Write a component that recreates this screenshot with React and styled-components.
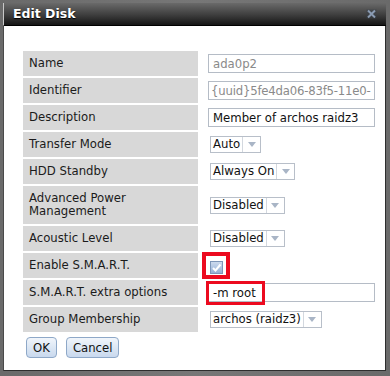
import * as React from "react";
import styled, { createGlobalStyle } from "styled-components";

const Global = createGlobalStyle`
    html, body {
        margin: 0;
        padding: 0;
        background: #6e6e6e;
    }
    body {
        width: 390px;
        height: 376px;
        overflow: hidden;
        font-family: "DejaVu Sans", Verdana, sans-serif;
    }
`;

const Frame = styled.div`
    width: 390px;
    height: 376px;
    box-sizing: border-box;
    padding: 3px 3px 0 3px;
    background: linear-gradient(to right, #6a6a6a, #777 50%, #6a6a6a);
`;

const Dialog = styled.div`
    width: 383px;
    height: 368px;
    box-sizing: border-box;
    display: flex;
    flex-direction: column;
    border: 1px solid #2e2e2e;
    border-top: none;
    border-left-color: #4a4a4a;
    background: #fff;
`;

const TitleBar = styled.div`
    height: 23px;
    box-sizing: border-box;
    display: flex;
    align-items: center;
    justify-content: space-between;
    padding: 0 9px 1px 9px;
    margin: 0 -1px;
    background: linear-gradient(to bottom, #6a6a6a 0%, #3d3d3d 55%, #151515 100%);
    border-left: 1px solid #c8c8c8;
    border-bottom: 1px solid #000;
`;

const Title = styled.span`
    color: #fff;
    font-size: 12.5px;
    font-weight: bold;
    text-shadow: 0 1px 1px #000;
`;

const Body = styled.div`
    flex: 1;
    padding: 24px 7px 0 19px;
    border-top: 1px solid #fff;
`;

const Form = styled.div`
    display: grid;
    grid-template-columns: 175px 1fr;
    row-gap: 2px;
`;

const Label = styled.div`
    background: #d8d8d8;
    color: #1b1b1b;
    font-size: 11.7px;
    line-height: 13px;
    padding: 6px 6px;
`;

const Value = styled.div`
    display: flex;
    align-items: center;
    padding-left: ${(p) => p.$indent || 10}px;
`;

const TextInput = styled.div`
    position: relative;
    width: 167px;
    height: 19px;
    box-sizing: border-box;
    border: 1px solid #b5bcc6;
    padding: 0 ${(p) => (p.$tight ? 2 : 4)}px;
    display: flex;
    align-items: center;
    font-size: 11.7px;
    letter-spacing: ${(p) => (p.$tight ? "-0.2px" : "normal")};
    color: ${(p) => (p.$muted ? "#8a8a8a" : "#111")};
    white-space: nowrap;
`;

const Select = styled.div`
    display: flex;
    height: 17px;
    box-sizing: border-box;
    border: 1px solid #b8bfc9;
    font-size: 11.7px;
    color: #111;
`;

const SelectText = styled.span`
    padding: 0 2px 0 2px;
    line-height: 15px;
`;

const Arrow = styled.span`
    width: 17px;
    border-left: 1px solid #d3d8df;
    display: flex;
    align-items: center;
    justify-content: center;
`;

const CheckWrap = styled.div`
    position: relative;
    width: 13px;
    height: 13px;
`;

const Marker = styled.div`
    position: absolute;
    left: ${(p) => p.$l}px;
    top: ${(p) => p.$t}px;
    width: ${(p) => p.$w}px;
    height: ${(p) => p.$h}px;
    box-sizing: border-box;
    border: ${(p) => p.$b}px solid #ec0a1f;
    pointer-events: none;
`;

const Buttons = styled.div`
    display: flex;
    gap: 9px;
    margin: 5px 0 0 3px;
`;

const Button = styled.button`
    height: 21px;
    padding: 0 6px;
    font-family: "DejaVu Sans", Verdana, sans-serif;
    font-size: 11.7px;
    color: #111;
    border: 1px solid #8ea8c8;
    border-radius: 4px;
    background: linear-gradient(to bottom, #f1f5fb 0%, #dce7f4 50%, #c9d9ee 100%);
`;

const SelectBox = ({ children }) => (
    <Select>
        <SelectText>{children}</SelectText>
        <Arrow>
            <svg width="8" height="5" viewBox="0 0 8 5">
                <path d="M0 0 H8 L4 5 Z" fill="#a9b5c6" />
            </svg>
        </Arrow>
    </Select>
);

const CloseIcon = () => (
    <svg width="11" height="10" viewBox="0 0 11 10">
        <rect x="0.5" y="0.5" width="10" height="9" fill="#3a4048" opacity="0.5" />
        <path d="M2 1.5 L9 8.5 M9 1.5 L2 8.5" stroke="#8a9bb2" strokeWidth="2" />
    </svg>
);

const Checkbox = () => (
    <svg width="13" height="13" viewBox="0 0 13 13">
        <defs>
            <linearGradient id="cb" x1="0" y1="0" x2="0" y2="1">
                <stop offset="0" stopColor="#cfdcee" />
                <stop offset="1" stopColor="#93afd6" />
            </linearGradient>
        </defs>
        <rect x="0.5" y="0.5" width="12" height="12" fill="url(#cb)" stroke="#7e96b8" />
        <path d="M3 7 L5.5 9.5 L10.5 3.5" fill="none" stroke="#fff" strokeWidth="2" />
    </svg>
);

const App = () => {
    return (
        <Frame>
            <Global />
            <Dialog>
                <TitleBar>
                    <Title>Edit Disk</Title>
                    <CloseIcon />
                </TitleBar>
                <Body>
                    <Form>
                        <Label>Name</Label>
                        <Value>
                            <TextInput $muted>ada0p2</TextInput>
                        </Value>

                        <Label>Identifier</Label>
                        <Value>
                            <TextInput $muted $tight>{"{uuid}5fe4da06-83f5-11e0-"}</TextInput>
                        </Value>

                        <Label>Description</Label>
                        <Value>
                            <TextInput>Member of archos raidz3</TextInput>
                        </Value>

                        <Label>Transfer Mode</Label>
                        <Value $indent={12}>
                            <SelectBox>Auto</SelectBox>
                        </Value>

                        <Label>HDD Standby</Label>
                        <Value $indent={12}>
                            <SelectBox>Always On</SelectBox>
                        </Value>

                        <Label>
                            Advanced Power
                            <br />
                            Management
                        </Label>
                        <Value $indent={12}>
                            <SelectBox>Disabled</SelectBox>
                        </Value>

                        <Label>Acoustic Level</Label>
                        <Value $indent={12}>
                            <SelectBox>Disabled</SelectBox>
                        </Value>

                        <Label>Enable S.M.A.R.T.</Label>
                        <Value $indent={12}>
                            <CheckWrap>
                                <Checkbox />
                                <Marker $l={-8} $t={-7} $w={28} $h={27} $b={4} />
                            </CheckWrap>
                        </Value>

                        <Label>S.M.A.R.T. extra options</Label>
                        <Value>
                            <TextInput>
                                -m root
                                <Marker $l={-3} $t={-3} $w={59} $h={24} $b={3} />
                            </TextInput>
                        </Value>

                        <Label>Group Membership</Label>
                        <Value $indent={12}>
                            <SelectBox>archos (raidz3)</SelectBox>
                        </Value>
                    </Form>
                    <Buttons>
                        <Button>OK</Button>
                        <Button>Cancel</Button>
                    </Buttons>
                </Body>
            </Dialog>
        </Frame>
    );
};

export default App;
